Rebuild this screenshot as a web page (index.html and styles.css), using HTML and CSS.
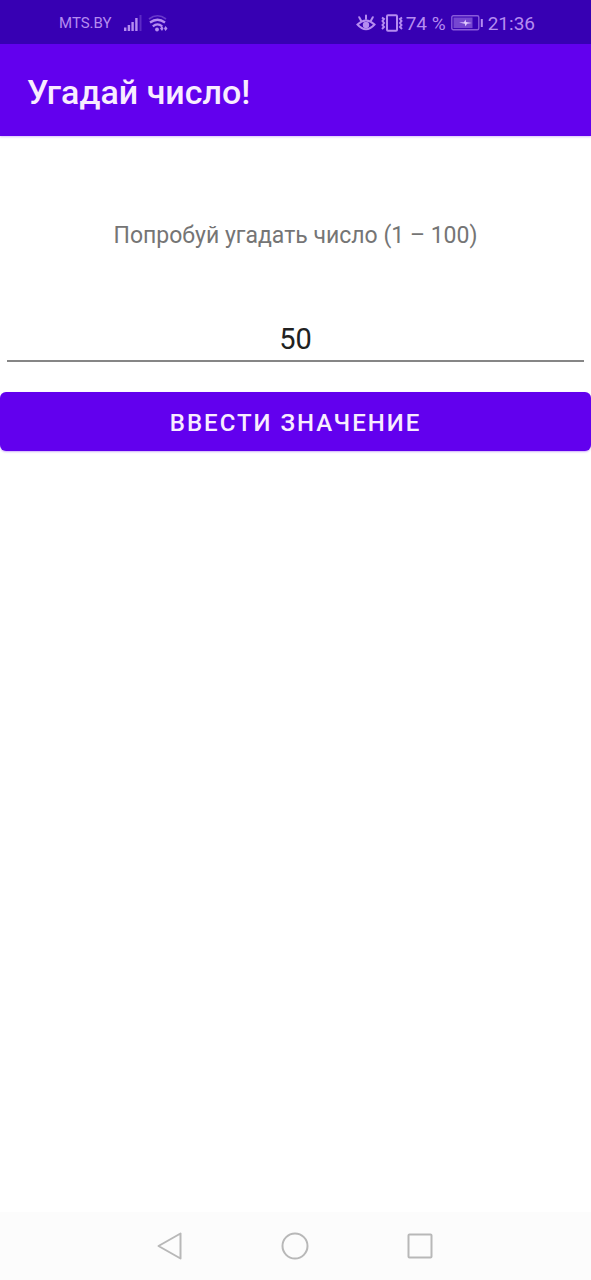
FILE: index.html
```html
<!DOCTYPE html>
<html lang="ru">
<head>
<meta charset="utf-8">
<meta name="viewport" content="width=device-width, initial-scale=1">
<title>Угадай число!</title>
<link rel="stylesheet" href="styles.css">
</head>
<body>
<div class="status">
  <div class="status-group">
    <span class="carrier">MTS.BY</span>
    <svg class="signal" width="18" height="18" viewBox="0 0 18 18" aria-hidden="true">
      <path d="M1.200 17v-3.500M4.900 17v-6M8.600 17V8M12.400 17V4" fill="none" stroke="currentColor" stroke-width="2.400"/>
      <path d="M16.500 17V1" stroke="currentColor" stroke-width="2" opacity=".3"/>
    </svg>
    <svg class="wifi" width="20" height="18" viewBox="0 0 20 18" aria-hidden="true">
      <path d="M1 5Q9.500-1.500 18 5" fill="none" stroke="currentColor" stroke-width="1.600" opacity=".4"/>
      <path d="M2 8.500q7.500-5.500 15 0M4.800 12.300q4.700-4 9.400 0" fill="none" stroke="currentColor" stroke-width="2.200"/>
      <circle cx="9" cy="15.500" r="1.900" fill="currentColor"/>
      <path d="M12 14.500l2-2.500 1.500 2.500L14 17zM16 14.500l1.500-2.500 2 2.500-2 2.500z" fill="currentColor"/>
    </svg>
  </div>
  <div class="status-group">
    <svg class="eye" width="20" height="18" viewBox="0 0 20 18" aria-hidden="true">
      <g fill="none" stroke="currentColor" stroke-width="2" stroke-linecap="round">
        <path d="M1.500 10.500Q10 2.500 18.500 10.500 10 20 1.500 10.500z"/>
        <path d="M10 5V1.500M5 6.500L3.200 3.200M15 6.500l1.800-3.300"/>
      </g>
      <circle cx="10" cy="11" r="3.200" fill="currentColor"/>
    </svg>
    <svg class="vibrate" width="22" height="18" viewBox="0 0 22 18" aria-hidden="true">
      <g fill="none" stroke="currentColor" stroke-width="2">
        <rect x="6" y="1.200" width="10" height="15.600" rx="1"/>
        <path d="M1 3.500l2 1.500-1.500 2L3 9l-1.500 2L3 13l-2 2M21 3.500L19 5l1.500 2L19 9l1.500 2-1.500 2 2 2"/>
      </g>
    </svg>
    <span class="percent">74 %</span>
    <svg class="battery" width="32" height="16" viewBox="0 0 32 16" aria-hidden="true">
      <rect x=".8" y=".8" width="27" height="14" rx="1.500" fill="none" stroke="currentColor" stroke-width="1.400" opacity=".65"/>
      <rect x="2.500" y="2.500" width="19" height="10.600" fill="currentColor" opacity=".5"/>
      <path d="M8 7.500l5-.2 1.500-2.800.5 2.500 6 1-5 .8-1.500 2.700-.7-2.700z" fill="#e2ccff"/>
      <path d="M30.800 4v8" stroke="currentColor" stroke-width="2"/>
    </svg>
    <time class="clock">21:36</time>
  </div>
</div>
<header class="appbar"><h1 class="title">Угадай число!</h1></header>
<main class="content">
  <form class="form">
    <label class="hint" for="guess">Попробуй угадать число (1 – 100)</label>
    <div class="field"><input class="guess" id="guess" type="text" inputmode="numeric" value="50"></div>
    <button class="submit" type="button">ВВЕСТИ ЗНАЧЕНИЕ</button>
  </form>
</main>
<nav class="navbar">
  <button class="nav-button" type="button" aria-label="Назад">
    <svg width="28" height="28" viewBox="0 0 28 28"><path d="M24.500 1.500v25L2.500 14z" fill="none" stroke="currentColor" stroke-width="2" stroke-linejoin="round"/></svg>
  </button>
  <button class="nav-button" type="button" aria-label="Домой">
    <svg width="28" height="28" viewBox="0 0 28 28"><circle cx="14" cy="14" r="12.500" fill="none" stroke="currentColor" stroke-width="2"/></svg>
  </button>
  <button class="nav-button" type="button" aria-label="Недавние">
    <svg width="28" height="28" viewBox="0 0 28 28"><rect x="2.500" y="2.500" width="23" height="23" rx="1" fill="none" stroke="currentColor" stroke-width="2"/></svg>
  </button>
</nav>
</body>
</html>
```
FILE: styles.css
```css
* { box-sizing: border-box; }
body {
  margin: 0;
  min-height: 100vh;
  display: flex;
  flex-direction: column;
  background: #fff;
  font-family: Roboto, "Noto Sans", sans-serif;
}
svg { display: block; flex: none; }
.status {
  height: 44px;
  padding: 2px 56px 0 59px;
  display: flex;
  align-items: center;
  justify-content: space-between;
  background: #3700b3;
  color: #b58cf0;
}
.status-group { display: flex; align-items: center; }
.carrier { font-size: 15px; }
.signal { margin-left: 12px; }
.wifi { margin-left: 6px; }
.vibrate { margin: 0 3px 0 5px; }
.percent, .clock { font-size: 19px; }
.battery { margin: 0 5px; }
.appbar {
  height: 92px;
  padding: 4px 27px 0;
  display: flex;
  align-items: center;
  background: #6200ee;
  box-shadow: 0 1px 2px #6200ee40;
}
.title {
  margin: 0;
  color: #f8ecff;
  font-size: 34px;
  font-weight: 500;
}
.content { flex: 1; padding-top: 85px; }
.form { display: flex; flex-direction: column; }
.hint {
  color: #757575;
  font-size: 23px;
  line-height: 30px;
  text-align: center;
}
.field { padding: 65px 7px 0; }
.guess {
  display: block;
  width: 100%;
  height: 46px;
  padding: 2px 0 0;
  border: 0;
  border-bottom: 2px solid #868686;
  border-radius: 0;
  outline: 0;
  background: transparent;
  color: #212121;
  font: 400 29px Roboto, sans-serif;
  text-align: center;
}
.submit {
  height: 59px;
  margin-top: 30px;
  padding: 3px 0 0;
  border: 0;
  border-radius: 6px;
  background: #6200ee;
  box-shadow: 0 1px 2px #6200ee50;
  color: #f8ecff;
  font: 500 24px Roboto, sans-serif;
  letter-spacing: 2px;
}
.navbar {
  height: 68px;
  padding-right: 2px;
  display: flex;
  align-items: center;
  justify-content: center;
  gap: 97px;
  background: #fcfcfc;
}
.nav-button {
  padding: 0;
  border: 0;
  background: none;
  color: #b8b8b8;
}
```
